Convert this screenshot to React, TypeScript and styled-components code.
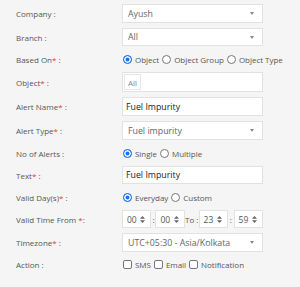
import React from "react";
import styled, { createGlobalStyle } from "styled-components";

const Global = createGlobalStyle`
  html, body { margin: 0; padding: 0; background: #f5f5f5; }
  body { font-family: "Open Sans", "Noto Sans", sans-serif; }
`;

const Form = styled.div`
  display: grid;
  grid-template-columns: 106px 141px;
  row-gap: 5px;
  padding: 4px 0 0 16px;
  width: 300px;
  box-sizing: border-box;
`;

const Label = styled.div`
  font-size: 8px;
  color: #555;
  display: flex;
  align-items: center;
  white-space: nowrap;
`;

const Req = styled.span`
  color: #e53935;
`;

const Field = styled.div<{ $h?: number }>`
  height: ${(p) => p.$h ?? 19}px;
  display: flex;
  align-items: center;
  font-size: 8px;
  color: #555;
`;

const Box = styled.div<{ $dark?: boolean }>`
  flex: 1;
  height: 100%;
  box-sizing: border-box;
  background: #fff;
  border: 1px solid #e2e2e2;
  display: flex;
  align-items: center;
  padding: 0 ${(p) => (p.$dark ? 3 : 5)}px;
  font-size: 8.8px;
  color: ${(p) => (p.$dark ? "#222" : "#666")};
  white-space: nowrap;
`;

const Caret = styled.span`
  margin-left: auto;
  width: 0;
  height: 0;
  border-left: 2.5px solid transparent;
  border-right: 2.5px solid transparent;
  border-top: 3px solid #888;
  margin-right: 3px;
`;

const Tag = styled.span`
  border: 1px solid #e6e6e6;
  height: 16px;
  padding: 0 3px;
  display: flex;
  align-items: center;
  color: #888;
  font-size: 8px;
  margin-left: -4px;
  box-sizing: border-box;
`;

const Choice = styled.label`
  display: flex;
  align-items: center;
  margin-right: 2px;
  color: #555;
  font-size: 8px;
  letter-spacing: -0.03px;
  white-space: nowrap;
`;

const Radio = styled.span<{ $on?: boolean }>`
  width: 9px;
  height: 9px;
  border-radius: 50%;
  box-sizing: border-box;
  margin: 0 3px 0 1px;
  border: 1px solid ${(p) => (p.$on ? "#1a73e8" : "#777")};
  background: ${(p) => (p.$on ? "#1a73e8" : "#fff")};
  box-shadow: ${(p) => (p.$on ? "inset 0 0 0 1.5px #fff" : "none")};
`;

const Check = styled.span`
  width: 9px;
  height: 9px;
  border-radius: 2px;
  box-sizing: border-box;
  border: 1px solid #777;
  background: #fff;
  margin: 0 3px 0 1px;
`;

const Spin = styled.div`
  width: 34px;
  height: 18px;
  box-sizing: border-box;
  background: #fff;
  border: 1px solid #e2e2e2;
  display: flex;
  align-items: center;
  padding: 0 5px 0 4px;
  color: #555;
  font-size: 8.5px;
  justify-content: space-between;
`;

const Sep = styled.span<{ $w: number }>`
  width: ${(p) => p.$w}px;
  text-align: center;
  color: #555;
  font-size: 8px;
`;

const Arrows = () => (
  <svg width="5" height="7" viewBox="0 0 5 7">
    <path d="M2.5 0 L5 2.8 L0 2.8 Z M2.5 7 L5 4.2 L0 4.2 Z" fill="#666" />
  </svg>
);

const Spinner = ({ v }: { v: string }) => (
  <Spin>
    <span>{v}</span>
    <Arrows />
  </Spin>
);

export default function App() {
  return (
    <>
      <Global />
      <Form>
        <Label>Company :</Label>
        <Field>
          <Box>Ayush<Caret /></Box>
        </Field>

        <Label>Branch :</Label>
        <Field $h={18}>
          <Box>All<Caret /></Box>
        </Field>

        <Label>Based On<Req>*</Req>&nbsp;:</Label>
        <Field $h={16}>
          <Choice><Radio $on />Object</Choice>
          <Choice><Radio />Object Group</Choice>
          <Choice><Radio />Object Type</Choice>
        </Field>

        <Label>Object<Req>*</Req>&nbsp;:</Label>
        <Field $h={20}>
          <Box><Tag>All</Tag></Box>
        </Field>

        <Label>Alert Name<Req>*</Req>&nbsp;:</Label>
        <Field>
          <Box $dark>Fuel Impurity</Box>
        </Field>

        <Label>Alert Type<Req>*</Req>&nbsp;:</Label>
        <Field>
          <Box>Fuel impurity<Caret /></Box>
        </Field>

        <Label>No of Alerts :</Label>
        <Field $h={16}>
          <Choice><Radio $on />Single</Choice>
          <Choice><Radio />Multiple</Choice>
        </Field>

        <Label>Text<Req>*</Req>&nbsp;:</Label>
        <Field $h={18}>
          <Box $dark>Fuel Impurity</Box>
        </Field>

        <Label>Valid Day(s)<Req>*</Req>&nbsp;:</Label>
        <Field $h={16}>
          <Choice><Radio $on />Everyday</Choice>
          <Choice><Radio />Custom</Choice>
        </Field>

        <Label>Valid Time From&nbsp;<Req>*</Req>:</Label>
        <Field $h={18}>
          <Spinner v="00" />
          <Sep $w={5}>:</Sep>
          <Spinner v="00" />
          <Sep $w={17}>To :</Sep>
          <Spinner v="23" />
          <Sep $w={7}>:</Sep>
          <Spinner v="59" />
        </Field>

        <Label>Timezone<Req>*</Req>&nbsp;:</Label>
        <Field>
          <Box>UTC+05:30 - Asia/Kolkata<Caret /></Box>
        </Field>

        <Label>Action :</Label>
        <Field $h={14}>
          <Choice><Check />SMS</Choice>
          <Choice><Check />Email</Choice>
          <Choice><Check />Notification</Choice>
        </Field>
      </Form>
    </>
  );
}
